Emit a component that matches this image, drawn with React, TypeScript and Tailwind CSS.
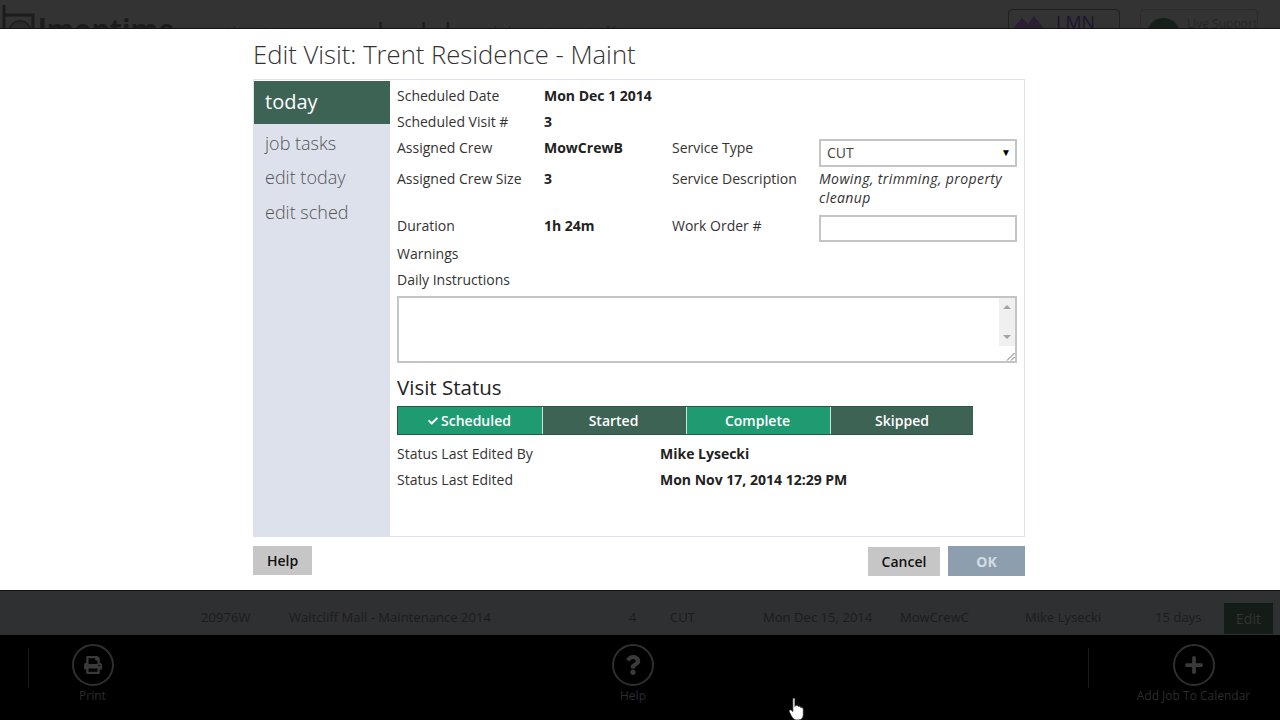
import { FaCheck, FaPlus, FaPrint, FaQuestion } from "react-icons/fa"

const font = "font-['Open_Sans',sans-serif]"

function Label({ children }: { children: React.ReactNode }) {
  return <div className="text-[14px] leading-[26px] text-[#333]">{children}</div>
}

function Value({ children }: { children: React.ReactNode }) {
  return <div className="text-[14px] leading-[26px] font-bold text-[#222]">{children}</div>
}

function StatusButton({ label, className, checked }: { label: string; className: string; checked?: boolean }) {
  return (
    <div className={"flex items-center justify-center text-[14px] font-semibold text-white " + className}>
      {checked && <FaCheck className="mr-[3px] h-[10px] w-[10px]" />}
      {label}
    </div>
  )
}

function FooterAction({ label, children, className }: { label: string; children: React.ReactNode; className: string }) {
  return (
    <div className={"flex flex-col items-center " + className}>
      <div className="flex h-[42px] w-[42px] items-center justify-center rounded-full border-2 border-[#2f2f2f] text-[#3a3a3a]">
        {children}
      </div>
      <div className="mt-[2px] text-[12px] leading-[16px] whitespace-nowrap text-[#2c2c2c]">{label}</div>
    </div>
  )
}

export default function App() {
  return (
    <div className={"flex h-[720px] w-[1280px] flex-col overflow-hidden bg-black " + font}>
      {/* dimmed header, only the top edge shows above the dialog */}
      <div className="flex h-[29px] shrink-0 items-start overflow-hidden border-b border-[#141414] bg-[#333]">
        <svg width="36" height="28" viewBox="0 0 36 28" className="ml-[2px] mt-[4px] shrink-0">
          <path d="M2 1 V28 M2 11 H31 V28" fill="none" stroke="#1c1c1c" strokeWidth="3" />
          <circle cx="18" cy="28" r="11" fill="#2b2b2b" stroke="#222" strokeWidth="2" />
        </svg>
        <div className="mt-[11px] text-[28px] leading-[36px] font-bold text-[#1c1c1c]">lmontime</div>
        <div className="ml-[34px] mt-[21px] text-[17px] leading-[22px] text-[#262626]">estimate</div>
        <div className="ml-[73px] mt-[14px] text-[28px] leading-[36px] text-[#1c1c1c]">schedule</div>
        <div className="ml-[26px] mt-[21px] text-[17px] leading-[22px] text-[#262626]">job cost</div>
        <div className="ml-[26px] mt-[21px] text-[17px] leading-[22px] text-[#262626]">staff</div>
        <div className="ml-auto mt-[9px] flex h-[30px] w-[112px] items-start rounded-sm border border-[#1f1f1f] pl-[2px]">
          <svg width="35" height="20" viewBox="0 0 35 20" className="mt-[5px] shrink-0">
            <path d="M0 16 L11 3 L17 9 L23 1 L35 16 V20 H0 Z" fill="#2a1e33" />
          </svg>
          <span className="ml-[10px] text-[18px] leading-[24px] text-[#1e1530]">LMN</span>
        </div>
        <div className="ml-[20px] mr-[22px] mt-[9px] flex h-[30px] w-[118px] items-start rounded-sm border border-[#2b2b2b] pl-[6px]">
          <div className="mt-[8px] h-[33px] w-[33px] shrink-0 rounded-full bg-[#142019]" />
          <span className="ml-[7px] mt-[6px] text-[12px] leading-[16px] whitespace-nowrap text-[#262626]">Live Support</span>
        </div>
      </div>

      {/* dialog */}
      <div className="h-[561px] shrink-0 bg-white pl-[253px] pr-[255px]">
        <h1 className="h-[50px] pt-[9px] text-[25.65px] leading-[34px] font-light text-[#333]">
          Edit Visit: Trent Residence - Maint
        </h1>
        <div className="flex h-[458px] border border-[#dde1ec] pt-px">
          <div className="w-[136px] shrink-0 bg-[#dde1ec]">
            <div className="flex h-[43px] items-center border-b border-[#3d6354] bg-[#3d6354] pl-[11px] text-[20px] text-white">
              today
            </div>
            <div className="mt-[2px] flex flex-col pl-[11px] text-[18px] font-light text-[#555]">
              <div className="mt-[4px] h-[34px] leading-[26px]">job tasks</div>
              <div className="h-[35px] leading-[26px]">edit today</div>
              <div className="h-[35px] leading-[26px]">edit sched</div>
            </div>
          </div>

          <div className="flex-1 pl-[7px] pr-[7px] pt-[2px]">
            <div className="grid grid-cols-[147px_128px_147px_198px] grid-rows-[26px_26px_31px_47px_28px_26px_26px]">
              <Label>Scheduled Date</Label>
              <div className="col-span-3">
                <Value>Mon Dec 1 2014</Value>
              </div>
              <Label>Scheduled Visit #</Label>
              <div className="col-span-3">
                <Value>3</Value>
              </div>
              <Label>Assigned Crew</Label>
              <Value>MowCrewB</Value>
              <Label>Service Type</Label>
              <div className="mt-[4px] flex h-[28px] items-center justify-between border-2 border-[#c4c4c4] pb-px pl-[6px] pr-[4px] text-[14px] text-[#444]">
                <span>CUT</span>
                <span className="text-[10px] text-black">▼</span>
              </div>
              <Label>Assigned Crew Size</Label>
              <Value>3</Value>
              <Label>Service Description</Label>
              <div className="pt-[3px] text-[14px] leading-[19px] tracking-[0.4px] text-[#333] italic">
                Mowing, trimming, property cleanup
              </div>
              <Label>Duration</Label>
              <Value>1h 24m</Value>
              <Label>Work Order #</Label>
              <div className="mt-[2px] h-[27px] border-2 border-[#c4c4c4]" />
              <div className="col-span-4">
                <Label>Warnings</Label>
              </div>
              <div className="col-span-4">
                <Label>Daily Instructions</Label>
              </div>
            </div>

            <div className="mt-[3px] flex h-[67px] w-[620px] justify-end border-2 border-[#c4c4c4]">
              <div className="flex w-[16px] flex-col">
                <div className="flex flex-1 flex-col items-center justify-between bg-[#f0f0f0] py-[7px]">
                  <div className="h-0 w-0 border-x-[4px] border-b-[4px] border-x-transparent border-b-[#a3a3a3]" />
                  <div className="h-0 w-0 border-x-[4px] border-t-[4px] border-x-transparent border-t-[#a3a3a3]" />
                </div>
                <div className="flex h-[15px] items-end justify-end bg-white">
                  <svg width="9" height="9" viewBox="0 0 9 9" stroke="#666" fill="none">
                    <path d="M1 8.5 L8.5 1 M5 8.5 L8.5 5" />
                  </svg>
                </div>
              </div>
            </div>

            <h2 className="mt-[9px] text-[20.5px] leading-[30px] font-medium text-[#222]">Visit Status</h2>
            <div className="mt-[4px] flex h-[29px] w-[576px] border-y border-l border-[#2f5546]">
              <StatusButton label="Scheduled" checked className="w-[145px] border-r border-[#cfe5dc] bg-[#1f9b72] pr-px" />
              <StatusButton label="Started" className="w-[144px] border-r border-[#cfe5dc] bg-[#3d6354] pr-[2px]" />
              <StatusButton label="Complete" className="w-[144px] border-r border-[#cfe5dc] bg-[#1f9b72] pr-[2px]" />
              <StatusButton label="Skipped" className="w-[142px] bg-[#3d6354]" />
            </div>

            <div className="mt-[6px] grid grid-cols-[263px_1fr]">
              <Label>Status Last Edited By</Label>
              <Value>Mike Lysecki</Value>
              <Label>Status Last Edited</Label>
              <Value>Mon Nov 17, 2014 12:29 PM</Value>
            </div>
          </div>
        </div>

        <div className="mt-[9px] flex items-start justify-between">
          <div className="flex h-[29px] w-[59px] items-center justify-center bg-[#c6c6c6] text-[14px] font-semibold text-[#111]">
            Help
          </div>
          <div className="flex items-end gap-[8px]">
            <div className="flex h-[29px] w-[72px] items-center justify-center bg-[#c6c6c6] text-[14px] font-semibold text-[#111]">
              Cancel
            </div>
            <div className="flex h-[30px] w-[77px] items-center justify-center bg-[#8d9fae] text-[14px] font-bold text-[#d5dde3]">
              OK
            </div>
          </div>
        </div>
      </div>

      {/* dimmed table row behind the dialog */}
      <div className="flex h-[45px] shrink-0 items-center border-t border-[#141414] bg-[#2f3031] pt-[10px] text-[13px] tracking-[0.05px] text-[#1c1c1c]">
        <div className="ml-[201px] w-[88px]">20976W</div>
        <div className="w-[340px]">Waltcliff Mall - Maintenance 2014</div>
        <div className="w-[41px]">4</div>
        <div className="w-[93px]">CUT</div>
        <div className="w-[137px]">Mon Dec 15, 2014</div>
        <div className="w-[125px]">MowCrewC</div>
        <div className="w-[130px]">Mike Lysecki</div>
        <div className="w-[69px]">15 days</div>
        <div className="flex h-[31px] w-[49px] items-center justify-center bg-[#141c18] text-[14px] text-[#333]">Edit</div>
      </div>

      {/* dimmed footer toolbar */}
      <div className="relative flex flex-1 items-start pt-[9px]">
        <div className="ml-[28px] mt-[4px] h-[40px] w-px bg-[#1a1a1a]" />
        <FooterAction label="Print" className="ml-[42px] w-[43px]">
          <FaPrint className="h-[18px] w-[18px]" />
        </FooterAction>
        <FooterAction label="Help" className="ml-[498px] w-[42px]">
          <FaQuestion className="h-[20px] w-[20px]" />
        </FooterAction>
        <div className="ml-[434px] mt-[4px] h-[40px] w-px bg-[#1a1a1a]" />
        <FooterAction label="Add Job To Calendar" className="ml-[47px] w-[115px]">
          <FaPlus className="h-[20px] w-[20px]" />
        </FooterAction>
        {/* mouse cursor */}
        <svg className="absolute left-[788px] top-[62px]" width="17" height="24" viewBox="0 0 16 23">
          <path
            d="M4.5 1.5 C5.5 .5 6.5 1 6.5 2.5 V9 L7.5 8 C8.5 7.5 9.5 8 9.5 9 L10 9 C11 8.5 12 9 12 10 C13 9.7 14.5 10.5 14.5 12 V17 C14.5 20 13 22 10 22 H8 C5.5 22 4.5 20.5 3 18 L1 14 C.7 12.5 2 11.5 3.5 13 L4.5 14 Z"
            fill="#fff"
            stroke="#222"
            strokeWidth=".7"
          />
        </svg>
      </div>
    </div>
  )
}
